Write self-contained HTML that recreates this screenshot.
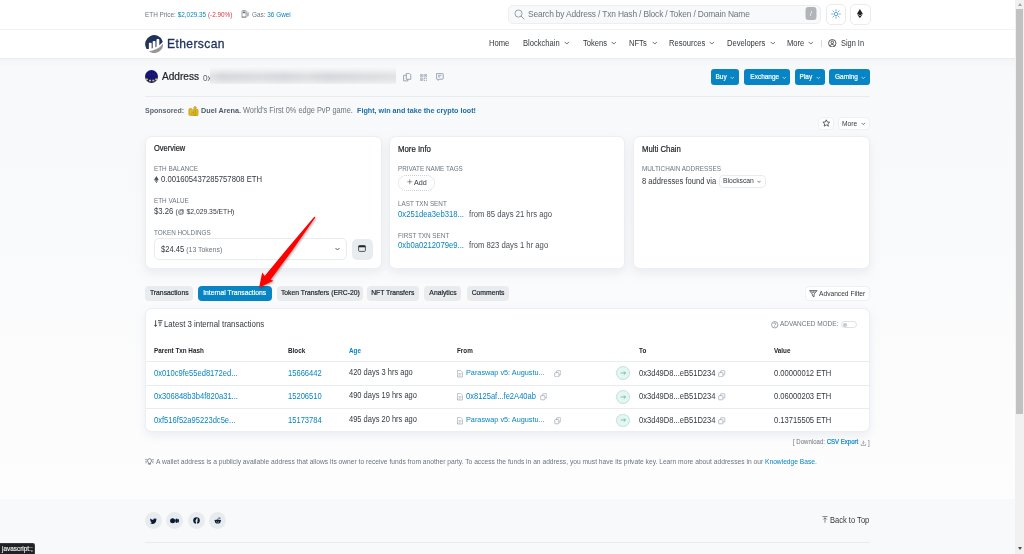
<!DOCTYPE html>
<html><head><meta charset="utf-8">
<style>
*{box-sizing:border-box}
html,body{margin:0;padding:0}
body{width:1024px;height:554px;overflow:hidden;position:relative;font-family:"Liberation Sans",sans-serif;color:#212529;background:#fff}
.a{position:absolute;white-space:nowrap}
.page{position:absolute;left:0;top:0;width:1015px;height:554px;overflow:hidden;background:#fff}
.topbar{position:absolute;left:0;top:0;width:1015px;height:30px;background:#fff;border-bottom:1px solid #f0f2f4;box-shadow:0 .5px 1px #f3f4f6}
.header{position:absolute;left:0;top:30px;width:1015px;height:29px;background:#fff;border-bottom:1px solid #eaedf0}
.main{position:absolute;left:0;top:59px;width:1015px;height:441px;background:linear-gradient(180deg,#f1f3f5 0px,#f6f7f9 4px,#f8f9fb 8px,#f9fafb 42%,#fcfcfd 72%,#fdfdfe 100%)}
.footer{position:absolute;left:0;top:498.6px;width:1015px;height:56px;background:#f8f9fa}
.scroll{position:absolute;left:1015px;top:0;width:9px;height:554px;background:#f1f1f1}
.thumb{position:absolute;left:1.1px;top:8.9px;width:6.9px;height:404.8px;background:#c1c1c1}
.link{color:#0784c3}
.muted{color:#6c757d}
.card{position:absolute;background:#fff;border-radius:6.5px;box-shadow:0 4px 10px rgba(189,197,209,.25);border:1px solid #eceef1}
.lbl{font-size:6.6px;color:#6c757d;letter-spacing:.1px}
.btnp{position:absolute;background:#0784c3;color:#fff;border-radius:3px;font-size:7px;font-weight:700;height:15.4px;line-height:15px;text-align:center}
.tab{position:absolute;white-space:nowrap;top:286px;height:14.5px;line-height:14.5px;border-radius:4px;background:#e9ecef;font-size:7.48px;-webkit-text-stroke:.2px currentColor;color:#212529;text-align:center}
.m{-webkit-text-stroke:.2px currentColor}
.tab.on{background:#0784c3;color:#fff}
.th{font-size:6.6px;font-weight:700;color:#212529}
.td{font-size:7.4px}
.hr{position:absolute;height:1px;background:#e9ecef}
</style></head><body>
<div class="page">
  <div class="topbar"></div>
  <div class="header"></div>
  <div class="main"></div>
  <div class="footer"></div>
</div>

<!-- TOPBAR -->
<div class="a" style="left:145px;top:11.26px;font-size:7.04px;line-height:1;color:#6c757d;transform:scaleX(0.9091);transform-origin:0 0">ETH Price: <span class="link">$2,029.35</span> <span style="color:#dc3545">(-2.90%)</span></div>
<svg class="a" style="left:241px;top:10px" width="8" height="8" viewBox="0 0 16 16"><path d="M2 2.5a1.5 1.5 0 0 1 1.5-1.5h5A1.5 1.5 0 0 1 10 2.5V14H2z" fill="none" stroke="#6c757d" stroke-width="1.3"/><rect x="3.5" y="3" width="5" height="3.5" fill="#6c757d"/><path d="M10 6h1.5a1 1 0 0 1 1 1v4.5a1 1 0 0 0 2 0V5l-2-2" fill="none" stroke="#6c757d" stroke-width="1.2"/><path d="M1 14.5h10" stroke="#6c757d" stroke-width="1.3"/></svg>
<div class="a" style="left:252px;top:11.26px;font-size:7.04px;line-height:1;color:#6c757d;transform:scaleX(0.9091);transform-origin:0 0">Gas: <span class="link">36 Gwei</span></div>
<div class="a" style="left:508px;top:5px;width:313px;height:18.5px;background:#f8f9fa;border:1px solid #eceef1;border-radius:5px"></div>
<svg class="a" style="left:513.5px;top:8.8px" width="11" height="11" viewBox="0 0 16 16"><circle cx="6.6" cy="6.6" r="5.2" fill="none" stroke="#8c98a4" stroke-width="1.3"/><path d="M10.4 10.4l4.2 4.2" stroke="#8c98a4" stroke-width="1.4" stroke-linecap="round"/></svg>
<div class="a" style="left:528px;top:9.9px;font-size:9.24px;letter-spacing:-.17px;line-height:1;color:#6c757d;transform:scaleX(0.9091);transform-origin:0 0">Search by Address / Txn Hash / Block / Token / Domain Name</div>
<div class="a" style="left:805px;top:7.21px;width:12px;height:13px;background:#b1b5ba;border-radius:3px;color:#fff;font-size:7.70px;line-height:13px;text-align:center;transform:scaleX(0.9091);transform-origin:50% 0">/</div>
<div class="a" style="left:825.5px;top:4.2px;width:20.3px;height:20.5px;border:1px solid #e9ecef;border-radius:5px;background:#fff"></div>
<svg class="a" style="left:830.7px;top:9px" width="10" height="10" viewBox="0 0 16 16"><circle cx="8" cy="8" r="2.8" fill="none" stroke="#2d8ad2" stroke-width="1.2"/><g stroke="#2d8ad2" stroke-width="1.05" stroke-linecap="round"><path d="M8 1v2M8 13v2M1 8h2M13 8h2M3 3l1.4 1.4M11.6 11.6L13 13M3 13l1.4-1.4M11.6 4.4L13 3"/></g></svg>
<div class="a" style="left:850.2px;top:4.2px;width:20.4px;height:20.5px;border:1px solid #e9ecef;border-radius:5px;background:#fff"></div>
<svg class="a" style="left:857.4px;top:9.3px" width="5.8" height="9.2" viewBox="0 0 10 16"><path d="M5 0L0 8.2 5 11.2 10 8.2z" fill="#222"/><path d="M5 12.2L0 9.2 5 16 10 9.2z" fill="#222"/></svg>

<!-- HEADER -->
<svg class="a" style="left:145px;top:34.5px" width="18" height="18" viewBox="0 0 121 122"><path d="M25.79 58.415a5.157 5.157 0 0 1 5.181-5.156l8.59.028a5.164 5.164 0 0 1 5.164 5.164v32.48c.967-.287 2.209-.593 3.568-.913a4.3 4.3 0 0 0 3.317-4.187V45.54a5.165 5.165 0 0 1 5.164-5.165h8.607a5.165 5.165 0 0 1 5.164 5.165v37.393s2.155-.872 4.254-1.758a4.311 4.311 0 0 0 2.632-3.967V32.63a5.164 5.164 0 0 1 5.163-5.164h8.606a5.164 5.164 0 0 1 5.164 5.164v36.71c7.462-5.408 15.024-11.912 21.025-19.733a8.662 8.662 0 0 0 1.319-8.092 60.792 60.792 0 1 0-110.201 50.25 7.688 7.688 0 0 0 7.334 3.8c1.628-.143 3.655-.346 6.065-.63a4.3 4.3 0 0 0 3.815-4.268z" fill="#21325b"/><path d="M25.607 110.5a60.813 60.813 0 0 0 96.569-49.19c0-1.4-.065-2.786-.158-4.163-22.217 33.134-63.238 48.626-96.409 53.35" fill="#979695"/></svg>
<div class="a" style="left:166.8px;top:36.58px;font-size:13.31px;line-height:1;-webkit-text-stroke:.3px #21325b;color:#21325b;letter-spacing:.42px;transform:scaleX(0.9091);transform-origin:0 0">Etherscan</div>
<div class="a" style="left:489.4px;top:38.96px;font-size:8.36px;line-height:1;color:#34393e;transform:scaleX(0.9091);transform-origin:0 0">Home</div>
<div class="a" style="left:523px;top:38.96px;font-size:8.36px;line-height:1;color:#34393e;transform:scaleX(0.9091);transform-origin:0 0">Blockchain</div>
<div class="a" style="left:583px;top:38.96px;font-size:8.36px;line-height:1;color:#34393e;transform:scaleX(0.9091);transform-origin:0 0">Tokens</div>
<div class="a" style="left:629px;top:38.96px;font-size:8.36px;line-height:1;color:#34393e;transform:scaleX(0.9091);transform-origin:0 0">NFTs</div>
<div class="a" style="left:669px;top:38.96px;font-size:8.36px;line-height:1;color:#34393e;transform:scaleX(0.9091);transform-origin:0 0">Resources</div>
<div class="a" style="left:727px;top:38.96px;font-size:8.36px;line-height:1;color:#34393e;transform:scaleX(0.9091);transform-origin:0 0">Developers</div>
<div class="a" style="left:787.3px;top:38.96px;font-size:8.36px;line-height:1;color:#34393e;transform:scaleX(0.9091);transform-origin:0 0">More</div>
<svg class="a" style="left:564.1px;top:41.3px" width="5.6" height="4" viewBox="0 0 11 8"><path d="M1.2 1.8l4.3 4.3 4.3-4.3" fill="none" stroke="#212529" stroke-width="1.3"/></svg>
<svg class="a" style="left:610.5px;top:41.3px" width="5.6" height="4" viewBox="0 0 11 8"><path d="M1.2 1.8l4.3 4.3 4.3-4.3" fill="none" stroke="#212529" stroke-width="1.3"/></svg>
<svg class="a" style="left:651.7px;top:41.3px" width="5.6" height="4" viewBox="0 0 11 8"><path d="M1.2 1.8l4.3 4.3 4.3-4.3" fill="none" stroke="#212529" stroke-width="1.3"/></svg>
<svg class="a" style="left:709.2px;top:41.3px" width="5.6" height="4" viewBox="0 0 11 8"><path d="M1.2 1.8l4.3 4.3 4.3-4.3" fill="none" stroke="#212529" stroke-width="1.3"/></svg>
<svg class="a" style="left:769.7px;top:41.3px" width="5.6" height="4" viewBox="0 0 11 8"><path d="M1.2 1.8l4.3 4.3 4.3-4.3" fill="none" stroke="#212529" stroke-width="1.3"/></svg>
<svg class="a" style="left:808.2px;top:41.3px" width="5.6" height="4" viewBox="0 0 11 8"><path d="M1.2 1.8l4.3 4.3 4.3-4.3" fill="none" stroke="#212529" stroke-width="1.3"/></svg>

<div class="a" style="left:821px;top:39.5px;width:0.8px;height:7px;background:#d5d9de"></div>
<svg class="a" style="left:828.4px;top:38.6px" width="8.5" height="8.5" viewBox="0 0 16 16"><circle cx="8" cy="8" r="7" fill="none" stroke="#212529" stroke-width="1.4"/><circle cx="8" cy="6.3" r="2.4" fill="none" stroke="#212529" stroke-width="1.4"/><path d="M3.5 13.2c1-2 2.6-3 4.5-3s3.5 1 4.5 3" fill="none" stroke="#212529" stroke-width="1.4"/></svg>
<div class="a" style="left:840.6px;top:39.9px;font-size:8.14px;line-height:1;color:#34393e;transform:scaleX(0.9091);transform-origin:0 0">Sign In</div>

<!-- MAIN HEADER -->
<svg class="a" style="left:145px;top:70.3px" width="13" height="13" viewBox="0 0 16 16"><circle cx="8" cy="8" r="8" fill="#15137a"/><rect x="4" y="4" width="3" height="3" fill="#231d5c"/><rect x="9" y="4" width="3" height="3" fill="#231d5c"/><rect x="1" y="10.5" width="2.5" height="2" fill="#c9cf2c"/><rect x="5" y="12" width="2.5" height="2" fill="#c9cf2c"/><rect x="9" y="12" width="2.5" height="2" fill="#c9cf2c"/><rect x="12.5" y="10.5" width="2.5" height="2" fill="#c9cf2c"/></svg>
<div class="a" style="left:162px;top:70.75px;font-size:11.11px;line-height:1;-webkit-text-stroke:.22px #212529;color:#212529;transform:scaleX(0.9091);transform-origin:0 0">Address</div>
<div class="a" style="left:203px;top:73.61px;font-size:9.02px;line-height:1;color:#5c636a;transform:scaleX(0.9091);transform-origin:0 0">0x</div>
<div class="a" style="left:209.5px;top:67.3px;width:186.7px;height:16.8px;background:linear-gradient(180deg,rgba(248,249,250,0) 0%,rgba(225,226,229,.55) 22%,rgba(212,214,217,.95) 52%,rgba(214,216,219,.9) 70%,rgba(226,227,230,.8) 92%,rgba(232,233,235,.6) 100%)"></div><div class="a" style="left:209.5px;top:67.3px;width:186.7px;height:16.8px;background:linear-gradient(90deg,rgba(248,249,250,.35) 0%,rgba(248,249,250,0) 6%,rgba(248,249,250,.15) 28%,rgba(248,249,250,0) 40%,rgba(248,249,250,.2) 52%,rgba(248,249,250,0) 63%,rgba(248,249,250,.15) 82%,rgba(248,249,250,.3) 100%)"></div>
<svg class="a" style="left:403px;top:73px" width="9" height="9" viewBox="0 0 9 9"><path d="M3.3 .4H6.3L7.8 1.9V6.3H3.3Z" fill="none" stroke="#8c98a4" stroke-width=".85" stroke-linejoin="round"/><path d="M3.3 2.3H.6V7.9H4.9V6.3" fill="none" stroke="#8c98a4" stroke-width=".85" stroke-linejoin="round"/></svg>
<svg class="a" style="left:420.2px;top:73.8px" width="7" height="7" viewBox="0 0 7 7"><g fill="none" stroke="#8c98a4" stroke-width=".7"><rect x=".35" y=".35" width="2.5" height="2.5" rx=".5"/><rect x="4.15" y=".35" width="2.5" height="2.5" rx=".5"/><rect x=".35" y="4.15" width="2.5" height="2.5" rx=".5"/></g><g fill="#8c98a4"><rect x="1.2" y="1.2" width=".8" height=".8"/><rect x="5" y="1.2" width=".8" height=".8"/><rect x="1.2" y="5" width=".8" height=".8"/><rect x="3.9" y="3.9" width="1" height="1"/><rect x="5.8" y="3.9" width="1" height="1"/><rect x="3.9" y="5.8" width="1" height="1"/><rect x="5.8" y="5.8" width="1" height="1"/></g></svg>
<svg class="a" style="left:436px;top:73px" width="7.5" height="8" viewBox="0 0 7.5 8"><path d="M1 .4h5.6a.6.6 0 0 1 .6.6v4.6a.6.6 0 0 1-.6.6H3.4L2.3 7.4V6.2H1a.6.6 0 0 1-.6-.6V1A.6.6 0 0 1 1 .4z" fill="none" stroke="#8c98a4" stroke-width=".85" stroke-linejoin="round"/><path d="M1.9 2.3h3.7M1.9 3.9h2.3" stroke="#8c98a4" stroke-width=".8"/></svg>
<div class="btnp" style="left:710.5px;top:69.4px;width:28.3px"></div><div class="a" style="left:715.4px;top:73.65px;font-size:7.15px;line-height:1;-webkit-text-stroke:.2px #fff;color:#fff;width:11.1px;text-align:center;transform:scaleX(0.9091);transform-origin:50% 0"><span style="display:inline-block">Buy</span></div><svg class="a" style="left:730px;top:75.6px" width="4.5" height="3.5" viewBox="0 0 10 8"><path d="M1 2l4 4 4-4" fill="none" stroke="#fff" stroke-width="1.5"/></svg>
<div class="btnp" style="left:743.7px;top:69.4px;width:46.3px"></div><div class="a" style="left:748.6px;top:73.65px;font-size:7.15px;line-height:1;-webkit-text-stroke:.2px #fff;color:#fff;width:28.7px;text-align:center;transform:scaleX(0.9091);transform-origin:50% 0"><span style="display:inline-block">Exchange</span></div><svg class="a" style="left:781.8px;top:75.6px" width="4.5" height="3.5" viewBox="0 0 10 8"><path d="M1 2l4 4 4-4" fill="none" stroke="#fff" stroke-width="1.5"/></svg>
<div class="btnp" style="left:795px;top:69.4px;width:29.8px"></div><div class="a" style="left:799.4px;top:73.65px;font-size:7.15px;line-height:1;-webkit-text-stroke:.2px #fff;color:#fff;width:12.6px;text-align:center;transform:scaleX(0.9091);transform-origin:50% 0"><span style="display:inline-block">Play</span></div><svg class="a" style="left:816px;top:75.6px" width="4.5" height="3.5" viewBox="0 0 10 8"><path d="M1 2l4 4 4-4" fill="none" stroke="#fff" stroke-width="1.5"/></svg>
<div class="btnp" style="left:829.3px;top:69.4px;width:40.7px"></div><div class="a" style="left:834px;top:73.65px;font-size:7.15px;line-height:1;-webkit-text-stroke:.2px #fff;color:#fff;width:23.6px;text-align:center;transform:scaleX(0.9091);transform-origin:50% 0"><span style="display:inline-block">Gaming</span></div><svg class="a" style="left:861px;top:75.6px" width="4.5" height="3.5" viewBox="0 0 10 8"><path d="M1 2l4 4 4-4" fill="none" stroke="#fff" stroke-width="1.5"/></svg>

<div class="hr" style="left:145px;top:96px;width:725px;background:#e9ecef"></div>
<div class="a" style="left:145px;top:106.70px;font-size:7.76px;line-height:1;color:#5d6670;font-weight:700;transform:scaleX(0.9091);transform-origin:0 0">Sponsored:</div>
<svg class="a" style="left:188px;top:105.5px" width="11" height="10.5" viewBox="0 0 11 10.5"><g fill="#e3bb1c" stroke="#a88512" stroke-width=".45"><rect x=".8" y="2.6" width="3.6" height="6.8" rx="1.2"/><rect x="5.6" y="3.3" width="2.6" height="6.4" rx="1"/><rect x="3.9" y="6.2" width="3" height="3.6" rx="1"/><rect x="5.8" y=".6" width="2.4" height="9" rx="1"/><rect x="7.6" y="3.3" width="2.5" height="6.4" rx="1"/></g></svg>
<div class="a" style="left:200.6px;top:106.69px;font-size:7.98px;line-height:1;color:#4f5a66;font-weight:700;transform:scaleX(0.9091);transform-origin:0 0">Duel Arena.</div>
<div class="a" style="left:243px;top:107.4px;font-size:8.14px;line-height:1;color:#6c757d;transform:scaleX(0.9091);transform-origin:0 0">World's First 0% edge PvP game.</div>
<div class="a" style="left:356.9px;top:106.69px;font-size:7.92px;line-height:1;color:#1a6ea8;font-weight:700;transform:scaleX(0.9091);transform-origin:0 0">Fight, win and take the crypto loot!</div>
<div class="a" style="left:818px;top:116.6px;width:16px;height:13.5px;background:#fff;border:1px solid #eef0f2;border-radius:4px"></div>
<svg class="a" style="left:821.8px;top:119.2px" width="8.5" height="8.5" viewBox="0 0 16 16"><path d="M8 1.5l1.9 4.1 4.5.5-3.4 3 1 4.4L8 11.2l-4 2.3 1-4.4-3.4-3 4.5-.5z" fill="none" stroke="#212529" stroke-width="1.3" stroke-linejoin="round"/></svg>
<div class="a" style="left:837.5px;top:116.6px;width:32.5px;height:13.5px;background:#fff;border:1px solid #eef0f2;border-radius:4px"></div>
<div class="a" style="left:842px;top:120.33px;font-size:7.37px;line-height:1;color:#34393e;transform:scaleX(0.9091);transform-origin:0 0">More</div>
<svg class="a" style="left:861px;top:122.4px" width="4.5" height="3.5" viewBox="0 0 10 8"><path d="M1 2l4 4 4-4" fill="none" stroke="#212529" stroke-width="1.4"/></svg>

<!-- CARDS -->
<div class="card" style="left:145.1px;top:135.6px;width:236.7px;height:133px"></div>
<div class="card" style="left:388.9px;top:135.6px;width:236.5px;height:133px"></div>
<div class="card" style="left:632.6px;top:135.6px;width:237px;height:133px"></div>
<div class="a" style="left:153.9px;top:144.7px;font-size:8.25px;line-height:1;-webkit-text-stroke:.2px #212529;color:#212529;transform:scaleX(0.9091);transform-origin:0 0">Overview</div>
<div class="a" style="left:153.9px;top:165.26px;font-size:6.99px;line-height:1;color:#6c757d;transform:scaleX(0.9091);transform-origin:0 0">ETH BALANCE</div>
<svg class="a" style="left:154px;top:175.9px" width="4.8" height="7.2" viewBox="0 0 10 15"><path d="M5 0L.3 7.6 5 10.4 9.7 7.6z" fill="#50575e"/><path d="M5 11.4L.3 8.6 5 15 9.7 8.6z" fill="#6c757d"/></svg>
<div class="a" style="left:161px;top:175.35px;font-size:8.47px;line-height:1;color:#34393e;transform:scaleX(0.9091);transform-origin:0 0">0.001605437285757808 ETH</div>
<div class="a" style="left:153.9px;top:197.36px;font-size:6.99px;line-height:1;color:#6c757d;transform:scaleX(0.9091);transform-origin:0 0">ETH VALUE</div>
<div class="a" style="left:153.9px;top:207.25px;font-size:8.47px;line-height:1;color:#34393e;transform:scaleX(0.9091);transform-origin:0 0">$3.26 <span style="font-size:7.48px">(@ $2,029.35/ETH)</span></div>
<div class="a" style="left:153.9px;top:228.76px;font-size:6.99px;line-height:1;color:#6c757d;transform:scaleX(0.9091);transform-origin:0 0">TOKEN HOLDINGS</div>
<div class="a" style="left:154.4px;top:238px;width:192.4px;height:21.6px;border:1px solid #e9ecef;border-radius:5px;background:#fff"></div>
<div class="a" style="left:161px;top:244.56px;font-size:8.36px;line-height:1;color:#34393e;transform:scaleX(0.9091);transform-origin:0 0">$24.45 <span style="font-size:7.59px;color:#6c757d;position:relative;top:.4px">(13 Tokens)</span></div>
<svg class="a" style="left:335px;top:246.6px" width="5" height="4" viewBox="0 0 10 8"><path d="M1 2l4 4 4-4" fill="none" stroke="#212529" stroke-width="1.5"/></svg>
<div class="a" style="left:351.5px;top:238.5px;width:21.5px;height:21.1px;border-radius:5px;background:#e9ecef"></div>
<svg class="a" style="left:358px;top:245.1px" width="8" height="7" viewBox="0 0 16 14"><rect x="1.2" y="1.2" width="13.6" height="11.6" rx="2" fill="none" stroke="#212529" stroke-width="1.5"/><rect x="1.2" y="1.2" width="13.6" height="3.4" fill="#212529"/></svg>
<div class="a" style="left:397.8px;top:144.5px;font-size:8.58px;line-height:1;-webkit-text-stroke:.2px #212529;color:#212529;transform:scaleX(0.9091);transform-origin:0 0">More Info</div>
<div class="a" style="left:397.8px;top:165.26px;font-size:6.99px;line-height:1;color:#6c757d;transform:scaleX(0.9091);transform-origin:0 0">PRIVATE NAME TAGS</div>
<div class="a" style="left:397.8px;top:174.5px;width:37.2px;height:16.2px;border:.9px dotted #c9ced4;border-radius:9px"></div>
<svg class="a" style="left:407.4px;top:179.4px" width="5.5" height="5.5" viewBox="0 0 10 10"><path d="M5 .5v9M.5 5h9" stroke="#3a3f44" stroke-width=".95"/></svg><div class="a" style="left:413.8px;top:178.79px;font-size:7.92px;line-height:1;color:#343a40;transform:scaleX(0.9091);transform-origin:0 0">Add</div>
<div class="a" style="left:397.8px;top:199.56px;font-size:6.99px;line-height:1;color:#6c757d;transform:scaleX(0.9091);transform-origin:0 0">LAST TXN SENT</div>
<div class="a" style="left:397.8px;top:209.95px;font-size:8.47px;line-height:1;;transform:scaleX(0.9091);transform-origin:0 0"><span class="link">0x251dea3eb318...</span></div>
<div class="a" style="left:468.5px;top:209.95px;font-size:8.47px;line-height:1;color:#4a4f55;transform:scaleX(0.9091);transform-origin:0 0">from 85 days 21 hrs ago</div>
<div class="a" style="left:397.8px;top:231.56px;font-size:6.99px;line-height:1;color:#6c757d;transform:scaleX(0.9091);transform-origin:0 0">FIRST TXN SENT</div>
<div class="a" style="left:397.8px;top:241.35px;font-size:8.47px;line-height:1;;transform:scaleX(0.9091);transform-origin:0 0"><span class="link">0xb0a0212079e9...</span></div>
<div class="a" style="left:468.5px;top:241.35px;font-size:8.47px;line-height:1;color:#4a4f55;transform:scaleX(0.9091);transform-origin:0 0">from 823 days 1 hr ago</div>
<div class="a" style="left:642px;top:144.5px;font-size:8.53px;line-height:1;-webkit-text-stroke:.2px #212529;color:#212529;transform:scaleX(0.9091);transform-origin:0 0">Multi Chain</div>
<div class="a" style="left:642px;top:165.26px;font-size:6.99px;line-height:1;color:#6c757d;transform:scaleX(0.9091);transform-origin:0 0">MULTICHAIN ADDRESSES</div>
<div class="a" style="left:642px;top:176.66px;font-size:8.36px;line-height:1;color:#34393e;transform:scaleX(0.9091);transform-origin:0 0">8 addresses found via</div>
<div class="a" style="left:719.2px;top:174.5px;width:46.4px;height:13.1px;border:1px solid #e9ecef;border-radius:4px;background:#fff"></div>
<div class="a" style="left:723.3px;top:177.1px;font-size:7.44px;line-height:1;color:#34393e;transform:scaleX(0.9091);transform-origin:0 0">Blockscan</div>
<svg class="a" style="left:757px;top:179.5px" width="4" height="3.2" viewBox="0 0 10 8"><path d="M1 2l4 4 4-4" fill="none" stroke="#212529" stroke-width="1.5"/></svg>

<!-- TABS -->
<div class="tab" style="left:145.2px;width:47.5px"><span style="display:inline-block;transform:scaleX(0.9091)">Transactions</span></div>
<div class="tab on" style="left:198.3px;width:73.4px"><span style="display:inline-block;transform:scaleX(0.9091)">Internal Transactions</span></div>
<div class="tab" style="left:276.5px;width:86.1px"><span style="display:inline-block;transform:scaleX(0.9091)">Token Transfers (ERC-20)</span></div>
<div class="tab" style="left:367px;width:52.0px"><span style="display:inline-block;transform:scaleX(0.9091)">NFT Transfers</span></div>
<div class="tab" style="left:424.2px;width:37.1px"><span style="display:inline-block;transform:scaleX(0.9091)">Analytics</span></div>
<div class="tab" style="left:466.5px;width:42.7px"><span style="display:inline-block;transform:scaleX(0.9091)">Comments</span></div>
<div class="a" style="left:804.6px;top:285.8px;width:65.4px;height:15px;background:#fff;border:1px solid #eef0f2;border-radius:4px"></div>
<svg class="a" style="left:809.3px;top:289.7px" width="8.5" height="7.5" viewBox="0 0 17 15"><path d="M1 1.2h15L10.2 8.2v5.3l-3.4-2V8.2z" fill="none" stroke="#212529" stroke-width="1.3" stroke-linejoin="round"/><path d="M4.2 1.5l3.3 4.3M8.5 1.5v4.5M12.8 1.5L9.5 5.8" stroke="#212529" stroke-width="1"/></svg>
<div class="a" style="left:819px;top:289.84px;font-size:7.32px;line-height:1;color:#34393e;transform:scaleX(0.9091);transform-origin:0 0">Advanced Filter</div>
<div class="card" style="left:145.3px;top:307.6px;width:724.5px;height:124px"></div>
<svg class="a" style="left:153.6px;top:320.3px" width="9" height="7" viewBox="0 0 18 14"><path d="M3.2 .5v12M.6 9.8l2.6 3 2.6-3" fill="none" stroke="#212529" stroke-width="1.6"/><path d="M8 1.2h9M8.8 4.6h7M9.6 8h5M10.4 11.4h3" stroke="#212529" stroke-width="1.5"/></svg>
<div class="a" style="left:164px;top:319.94px;font-size:8.63px;line-height:1;color:#34393e;transform:scaleX(0.9091);transform-origin:0 0">Latest 3 internal transactions</div>
<svg class="a" style="left:771.3px;top:321px" width="7.5" height="7.5" viewBox="0 0 16 16"><circle cx="8" cy="8" r="6.8" fill="none" stroke="#6c757d" stroke-width="1.4"/><path d="M5.8 6.2a2.2 2.2 0 1 1 3.2 2c-.7.4-1 .8-1 1.6" fill="none" stroke="#6c757d" stroke-width="1.4"/><circle cx="8" cy="11.8" r=".9" fill="#6c757d"/></svg>
<div class="a" style="left:780px;top:321.45px;font-size:7.15px;letter-spacing:-.03px;line-height:1;color:#6c757d;transform:scaleX(0.9091);transform-origin:0 0">ADVANCED MODE:</div>
<div class="a" style="left:841px;top:321px;width:15.8px;height:7.4px;border:1px solid #dee2e6;border-radius:4px;background:#fff"></div>
<div class="a" style="left:842.8px;top:322.8px;width:3.8px;height:3.8px;border-radius:50%;background:#c5cad0"></div>
<div class="a" style="left:153.7px;top:347.9px;font-size:6.94px;line-height:1;font-weight:700;color:#212529;transform:scaleX(0.9091);transform-origin:0 0">Parent Txn Hash</div>
<div class="a" style="left:287.7px;top:347.9px;font-size:6.94px;line-height:1;font-weight:700;color:#212529;transform:scaleX(0.9091);transform-origin:0 0">Block</div>
<div class="a" style="left:348.5px;top:347.9px;font-size:6.94px;line-height:1;font-weight:700;color:#0784c3;transform:scaleX(0.9091);transform-origin:0 0">Age</div>
<div class="a" style="left:457.3px;top:347.9px;font-size:6.94px;line-height:1;font-weight:700;color:#212529;transform:scaleX(0.9091);transform-origin:0 0">From</div>
<div class="a" style="left:638.5px;top:347.9px;font-size:6.94px;line-height:1;font-weight:700;color:#212529;transform:scaleX(0.9091);transform-origin:0 0">To</div>
<div class="a" style="left:774.3px;top:347.9px;font-size:6.94px;line-height:1;font-weight:700;color:#212529;transform:scaleX(0.9091);transform-origin:0 0">Value</div>
<div class="hr" style="left:145.5px;top:360.7px;width:724px"></div>
<div class="hr" style="left:145.5px;top:384.8px;width:724px"></div>
<div class="hr" style="left:145.5px;top:408.3px;width:724px"></div>
<div class="a" style="left:153.7px;top:368.96px;font-size:8.36px;line-height:1;color:#0784c3;transform:scaleX(0.9091);transform-origin:0 0">0x010c9fe55ed8172ed...</div>
<div class="a" style="left:287.7px;top:368.96px;font-size:8.36px;line-height:1;color:#0784c3;transform:scaleX(0.9091);transform-origin:0 0">15666442</div>
<div class="a" style="left:348.5px;top:368.97px;font-size:8.25px;line-height:1;color:#34393e;transform:scaleX(0.9091);transform-origin:0 0">420 days 3 hrs ago</div>
<svg class="a" style="left:457.2px;top:370.0px" width="6" height="7.5" viewBox="0 0 12 15"><path d="M1 1h6.5L11 4.5V14H1z" fill="none" stroke="#8c98a4" stroke-width="1.1"/><path d="M3 7h6M3 9.5h6M3 12h4" stroke="#8c98a4" stroke-width=".9"/></svg>
<div class="a" style="left:465.8px;top:368.98px;font-size:8.03px;line-height:1;color:#0784c3;transform:scaleX(0.9091);transform-origin:0 0">Paraswap v5: Augustu...</div>
<svg class="a" style="left:553.9px;top:369.90000000000003px" width="7.5" height="7.5" viewBox="0 0 16 16"><rect x="1.5" y="5.5" width="9" height="9" rx="1.5" fill="none" stroke="#8c98a4" stroke-width="1.3"/><path d="M5.5 5.5V3A1.5 1.5 0 0 1 7 1.5h6A1.5 1.5 0 0 1 14.5 3v6a1.5 1.5 0 0 1-1.5 1.5h-2.5" fill="none" stroke="#8c98a4" stroke-width="1.3"/></svg>
<div class="a" style="left:616.2px;top:366.40000000000003px;width:13.8px;height:13.8px;border-radius:50%;background:#e5f5f1;border:.8px solid #bfe4da"></div>
<svg class="a" style="left:619.6px;top:370.1px" width="7" height="6" viewBox="0 0 14 12"><path d="M1.5 6h9.5M7.8 2.8L11 6 7.8 9.2" fill="none" stroke="#2ea58c" stroke-width="1.2"/></svg>
<div class="a" style="left:638.5px;top:368.96px;font-size:8.32px;line-height:1;color:#34393e;transform:scaleX(0.9091);transform-origin:0 0">0x3d49D8...eB51D234</div>
<svg class="a" style="left:718.3px;top:369.90000000000003px" width="7.5" height="7.5" viewBox="0 0 16 16"><rect x="1.5" y="5.5" width="9" height="9" rx="1.5" fill="none" stroke="#8c98a4" stroke-width="1.3"/><path d="M5.5 5.5V3A1.5 1.5 0 0 1 7 1.5h6A1.5 1.5 0 0 1 14.5 3v6a1.5 1.5 0 0 1-1.5 1.5h-2.5" fill="none" stroke="#8c98a4" stroke-width="1.3"/></svg>
<div class="a" style="left:774.3px;top:368.96px;font-size:8.36px;line-height:1;color:#34393e;transform:scaleX(0.9091);transform-origin:0 0">0.00000012 ETH</div>
<div class="a" style="left:153.7px;top:392.36px;font-size:8.36px;line-height:1;color:#0784c3;transform:scaleX(0.9091);transform-origin:0 0">0x306848b3b4f820a31...</div>
<div class="a" style="left:287.7px;top:392.36px;font-size:8.36px;line-height:1;color:#0784c3;transform:scaleX(0.9091);transform-origin:0 0">15206510</div>
<div class="a" style="left:348.5px;top:392.37px;font-size:8.25px;line-height:1;color:#34393e;transform:scaleX(0.9091);transform-origin:0 0">490 days 19 hrs ago</div>
<svg class="a" style="left:457.2px;top:393.4px" width="6" height="7.5" viewBox="0 0 12 15"><path d="M1 1h6.5L11 4.5V14H1z" fill="none" stroke="#8c98a4" stroke-width="1.1"/><path d="M3 7h6M3 9.5h6M3 12h4" stroke="#8c98a4" stroke-width=".9"/></svg>
<div class="a" style="left:465.8px;top:392.36px;font-size:8.36px;line-height:1;color:#0784c3;transform:scaleX(0.9091);transform-origin:0 0">0x8125af...fe2A40ab</div>
<svg class="a" style="left:539.5px;top:393.3px" width="7.5" height="7.5" viewBox="0 0 16 16"><rect x="1.5" y="5.5" width="9" height="9" rx="1.5" fill="none" stroke="#8c98a4" stroke-width="1.3"/><path d="M5.5 5.5V3A1.5 1.5 0 0 1 7 1.5h6A1.5 1.5 0 0 1 14.5 3v6a1.5 1.5 0 0 1-1.5 1.5h-2.5" fill="none" stroke="#8c98a4" stroke-width="1.3"/></svg>
<div class="a" style="left:616.2px;top:389.8px;width:13.8px;height:13.8px;border-radius:50%;background:#e5f5f1;border:.8px solid #bfe4da"></div>
<svg class="a" style="left:619.6px;top:393.5px" width="7" height="6" viewBox="0 0 14 12"><path d="M1.5 6h9.5M7.8 2.8L11 6 7.8 9.2" fill="none" stroke="#2ea58c" stroke-width="1.2"/></svg>
<div class="a" style="left:638.5px;top:392.36px;font-size:8.32px;line-height:1;color:#34393e;transform:scaleX(0.9091);transform-origin:0 0">0x3d49D8...eB51D234</div>
<svg class="a" style="left:718.3px;top:393.3px" width="7.5" height="7.5" viewBox="0 0 16 16"><rect x="1.5" y="5.5" width="9" height="9" rx="1.5" fill="none" stroke="#8c98a4" stroke-width="1.3"/><path d="M5.5 5.5V3A1.5 1.5 0 0 1 7 1.5h6A1.5 1.5 0 0 1 14.5 3v6a1.5 1.5 0 0 1-1.5 1.5h-2.5" fill="none" stroke="#8c98a4" stroke-width="1.3"/></svg>
<div class="a" style="left:774.3px;top:392.36px;font-size:8.36px;line-height:1;color:#34393e;transform:scaleX(0.9091);transform-origin:0 0">0.06000203 ETH</div>
<div class="a" style="left:153.7px;top:416.16px;font-size:8.36px;line-height:1;color:#0784c3;transform:scaleX(0.9091);transform-origin:0 0">0xf516f52a95223dc5e...</div>
<div class="a" style="left:287.7px;top:416.16px;font-size:8.36px;line-height:1;color:#0784c3;transform:scaleX(0.9091);transform-origin:0 0">15173784</div>
<div class="a" style="left:348.5px;top:416.17px;font-size:8.25px;line-height:1;color:#34393e;transform:scaleX(0.9091);transform-origin:0 0">495 days 20 hrs ago</div>
<svg class="a" style="left:457.2px;top:417.2px" width="6" height="7.5" viewBox="0 0 12 15"><path d="M1 1h6.5L11 4.5V14H1z" fill="none" stroke="#8c98a4" stroke-width="1.1"/><path d="M3 7h6M3 9.5h6M3 12h4" stroke="#8c98a4" stroke-width=".9"/></svg>
<div class="a" style="left:465.8px;top:416.18px;font-size:8.03px;line-height:1;color:#0784c3;transform:scaleX(0.9091);transform-origin:0 0">Paraswap v5: Augustu...</div>
<svg class="a" style="left:553.9px;top:417.1px" width="7.5" height="7.5" viewBox="0 0 16 16"><rect x="1.5" y="5.5" width="9" height="9" rx="1.5" fill="none" stroke="#8c98a4" stroke-width="1.3"/><path d="M5.5 5.5V3A1.5 1.5 0 0 1 7 1.5h6A1.5 1.5 0 0 1 14.5 3v6a1.5 1.5 0 0 1-1.5 1.5h-2.5" fill="none" stroke="#8c98a4" stroke-width="1.3"/></svg>
<div class="a" style="left:616.2px;top:413.6px;width:13.8px;height:13.8px;border-radius:50%;background:#e5f5f1;border:.8px solid #bfe4da"></div>
<svg class="a" style="left:619.6px;top:417.3px" width="7" height="6" viewBox="0 0 14 12"><path d="M1.5 6h9.5M7.8 2.8L11 6 7.8 9.2" fill="none" stroke="#2ea58c" stroke-width="1.2"/></svg>
<div class="a" style="left:638.5px;top:416.16px;font-size:8.32px;line-height:1;color:#34393e;transform:scaleX(0.9091);transform-origin:0 0">0x3d49D8...eB51D234</div>
<svg class="a" style="left:718.3px;top:417.1px" width="7.5" height="7.5" viewBox="0 0 16 16"><rect x="1.5" y="5.5" width="9" height="9" rx="1.5" fill="none" stroke="#8c98a4" stroke-width="1.3"/><path d="M5.5 5.5V3A1.5 1.5 0 0 1 7 1.5h6A1.5 1.5 0 0 1 14.5 3v6a1.5 1.5 0 0 1-1.5 1.5h-2.5" fill="none" stroke="#8c98a4" stroke-width="1.3"/></svg>
<div class="a" style="left:774.3px;top:416.16px;font-size:8.36px;line-height:1;color:#34393e;transform:scaleX(0.9091);transform-origin:0 0">0.13715505 ETH</div>
<div class="a" style="left:792.5px;top:439.39px;font-size:6.66px;line-height:1;color:#6c757d;transform:scaleX(0.9091);transform-origin:0 0">[ Download: <span style="color:#0784c3;-webkit-text-stroke:.2px #0784c3">CSV Export</span></div>
<svg class="a" style="left:859.8px;top:440.2px" width="6.8" height="6" viewBox="0 0 16 16"><path d="M8 1.5v8.5M4.8 7l3.2 3.2L11.2 7" fill="none" stroke="#6c757d" stroke-width="1.5"/><path d="M2 10.5v4h12v-4" fill="none" stroke="#6c757d" stroke-width="1.5"/></svg>
<div class="a" style="left:868.3px;top:439.6px;font-size:6.66px;line-height:1;color:#6c757d;transform:scaleX(0.9091);transform-origin:0 0">]</div>
<svg class="a" style="left:144.8px;top:457.6px" width="9" height="7.5" viewBox="0 0 18 15"><path d="M9 1.3a4 4 0 0 0-2.4 7.2V11h4.8V8.5A4 4 0 0 0 9 1.3z" fill="none" stroke="#5c636a" stroke-width="1.5"/><path d="M6.8 13.3h4.4M.5 3h3M.5 6.5h3M1 10l2.5-1M14.5 3h3M14.5 6.5h3M17 10l-2.5-1" stroke="#5c636a" stroke-width="1.3"/></svg>
<div class="a" style="left:155.5px;top:458.43px;font-size:7.35px;line-height:1;color:#6c757d;transform:scaleX(0.9091);transform-origin:0 0">A wallet address is a publicly available address that allows its owner to receive funds from another party. To access the funds in an address, you must have its private key. Learn more about addresses in our <span style="color:#0784c3">Knowledge Base</span>.</div>
<div class="a" style="left:145.2px;top:512.2px;width:17px;height:17.2px;border-radius:50%;background:#e9ecef"></div>
<div class="a" style="left:166.2px;top:512.2px;width:17px;height:17.2px;border-radius:50%;background:#e9ecef"></div>
<div class="a" style="left:187.9px;top:512.2px;width:17px;height:17.2px;border-radius:50%;background:#e9ecef"></div>
<div class="a" style="left:208.8px;top:512.2px;width:17px;height:17.2px;border-radius:50%;background:#e9ecef"></div>
<svg class="a" style="left:150.3px;top:517.6px" width="7" height="6.5" viewBox="0 0 24 20"><path d="M23.6 2.4c-.9.4-1.8.6-2.8.8 1-.6 1.8-1.5 2.1-2.7-.9.6-2 1-3.1 1.2A4.9 4.9 0 0 0 11.5 6 13.9 13.9 0 0 1 1.4.9a4.9 4.9 0 0 0 1.5 6.5c-.8 0-1.6-.2-2.2-.6 0 2.4 1.7 4.4 3.9 4.8-.7.2-1.5.2-2.2.1a4.9 4.9 0 0 0 4.6 3.4A9.8 9.8 0 0 1 0 17.1 13.9 13.9 0 0 0 7.5 19.3c9.1 0 14-7.5 14-14v-.6c1-.7 1.8-1.5 2.1-2.3z" fill="#081d35"/></svg>
<svg class="a" style="left:170.4px;top:518.3px" width="9" height="5.5" viewBox="0 0 18 11"><circle cx="5.2" cy="5.5" r="5" fill="#081d35"/><ellipse cx="13.2" cy="5.5" rx="2.8" ry="4.6" fill="#081d35"/><ellipse cx="17" cy="5.5" rx="1" ry="4" fill="#081d35"/></svg>
<svg class="a" style="left:193px;top:517.3px" width="7" height="7" viewBox="0 0 16 16"><circle cx="8" cy="8" r="7.5" fill="#081d35"/><path d="M9.3 16V10.3h1.9l.3-2.3H9.3V6.6c0-.6.2-1.1 1.1-1.1h1.2V3.5c-.2 0-.9-.1-1.7-.1-1.7 0-2.9 1-2.9 2.9V8H5.1v2.3H7V16z" fill="#e9ecef"/></svg>
<svg class="a" style="left:213.7px;top:517px" width="7.5" height="7.5" viewBox="0 0 16 16"><ellipse cx="8" cy="9.8" rx="6" ry="4.3" fill="#081d35"/><circle cx="13.3" cy="7.5" r="1.6" fill="#081d35"/><circle cx="2.7" cy="7.5" r="1.6" fill="#081d35"/><circle cx="12.5" cy="2.3" r="1.2" fill="#081d35"/><path d="M8 5.5L9 1.8l3.5.7" fill="none" stroke="#081d35" stroke-width=".9"/><circle cx="5.8" cy="9.3" r="1" fill="#e9ecef"/><circle cx="10.2" cy="9.3" r="1" fill="#e9ecef"/><path d="M5.5 11.5c1.5 1 3.5 1 5 0" fill="none" stroke="#e9ecef" stroke-width=".8"/></svg>
<svg class="a" style="left:821.6px;top:516px" width="6" height="7" viewBox="0 0 14 16"><path d="M1 1.2h12M7 4v11.5M3 8l4-4 4 4" fill="none" stroke="#34393e" stroke-width="1.4"/></svg>
<div class="a" style="left:830.2px;top:515.6px;font-size:8.3px;line-height:1;color:#34393e;transform:scaleX(0.9091);transform-origin:0 0">Back to Top</div>
<div class="hr" style="left:145px;top:542px;width:725px;background:#e9ecef"></div>
<div class="a" style="left:0;top:542.9px;width:35.2px;height:11.1px;background:#202124;border-top-right-radius:2.5px;border:.5px solid #3c3c3c;border-left:0;border-bottom:0"></div>
<div class="a" style="left:2.4px;top:545.4px;font-size:7.3px;line-height:1;color:#f1f3f4;-webkit-text-stroke:.15px #f1f3f4;transform:scaleX(0.88);transform-origin:0 0">javascript:;</div>
<svg class="a" style="left:0;top:0;overflow:visible" width="1015" height="554" viewBox="0 0 1015 554"><defs><filter id="sh" x="-20%" y="-20%" width="140%" height="140%"><feGaussianBlur in="SourceAlpha" stdDeviation="1.1"/><feOffset dx="1" dy="1" result="o"/><feComponentTransfer><feFuncA type="linear" slope=".35"/></feComponentTransfer><feMerge><feMergeNode/><feMergeNode in="SourceGraphic"/></feMerge></filter></defs><path filter="url(#sh)" d="M314.9 216.9 Q315.4 217.4 315 218 L291.5 251.5 L270.6 279.8 L273.4 280.8 L259.1 287.8 L262.2 272.4 L264.7 275.9 L287.4 248.5 L314.3 216.7 Q314.6 216.5 314.9 216.9Z" fill="#fe0000"/></svg>

<div class="scroll"><div class="thumb"></div><svg style="position:absolute;left:2.5px;top:3.4px" width="4" height="3" viewBox="0 0 4 3"><path d="M2 0L4 3H0z" fill="#a3a3a3"/></svg><svg style="position:absolute;left:2.5px;top:547.3px" width="4" height="3" viewBox="0 0 4 3"><path d="M0 0h4L2 3z" fill="#505050"/></svg></div>
</body></html>
